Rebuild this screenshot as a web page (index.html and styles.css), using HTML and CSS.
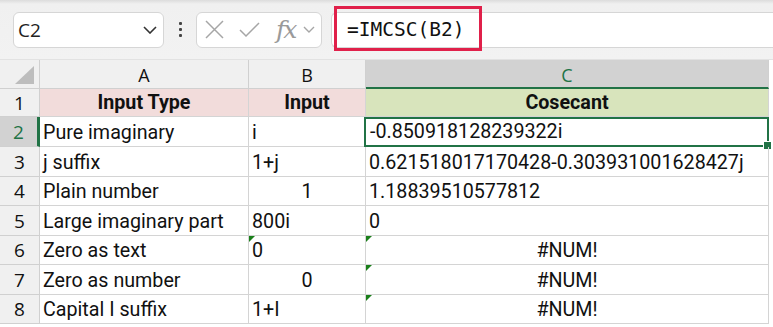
FILE: index.html
```html
<!DOCTYPE html>
<html lang="en">
<head>
    <meta charset="UTF-8">
    <title>IMCSC - Sheet</title>
    <link rel="stylesheet" href="styles.css">
</head>
<body>
    <div class="toolbar">
        <div class="name-box">
            <span>C2</span>
            <svg width="14" height="8" viewBox="0 0 14 8"><path d="M1 1 L7 7 L13 1" fill="none" stroke="#333" stroke-width="1.6"/></svg>
        </div>
        <div class="dots"><i></i><i></i><i></i></div>
        <div class="fx-buttons">
            <svg width="19" height="19" viewBox="0 0 19 19"><path d="M1 1 L18 18 M18 1 L1 18" stroke="#a6a6a6" stroke-width="1.5" fill="none"/></svg>
            <svg width="21" height="16" viewBox="0 0 21 16"><path d="M1 8 L7 14 L20 1" stroke="#a6a6a6" stroke-width="1.5" fill="none"/></svg>
            <span class="fx">fx</span>
            <svg width="12" height="7" viewBox="0 0 12 7"><path d="M1 1 L6 6 L11 1" fill="none" stroke="#a6a6a6" stroke-width="1.4"/></svg>
        </div>
        <div class="formula">
            <span class="formula-text">=IMCSC(B2)</span>
            <div class="highlight"></div>
        </div>
    </div>

    <div class="sheet">
        <div class="corner"><div class="corner-tri"></div></div>
        <div class="col-head">A</div>
        <div class="col-head">B</div>
        <div class="col-head active">C</div>

        <div class="row-head">1</div>
        <div class="cell head-pink">Input Type</div>
        <div class="cell head-pink">Input</div>
        <div class="cell head-green">Cosecant</div>

        <div class="row-head active">2</div>
        <div class="cell">Pure imaginary</div>
        <div class="cell">i</div>
        <div class="cell selected">-0.850918128239322i<span class="handle"></span></div>

        <div class="row-head">3</div>
        <div class="cell">j suffix</div>
        <div class="cell">1+j</div>
        <div class="cell">0.621518017170428-0.303931001628427j</div>

        <div class="row-head">4</div>
        <div class="cell">Plain number</div>
        <div class="cell center">1</div>
        <div class="cell">1.18839510577812</div>

        <div class="row-head">5</div>
        <div class="cell">Large imaginary part</div>
        <div class="cell">800i</div>
        <div class="cell">0</div>

        <div class="row-head">6</div>
        <div class="cell">Zero as text</div>
        <div class="cell flag">0</div>
        <div class="cell center flag">#NUM!</div>

        <div class="row-head">7</div>
        <div class="cell">Zero as number</div>
        <div class="cell center">0</div>
        <div class="cell center flag">#NUM!</div>

        <div class="row-head">8</div>
        <div class="cell">Capital I suffix</div>
        <div class="cell">1+I</div>
        <div class="cell center flag">#NUM!</div>
    </div>
</body>
</html>
```

FILE: styles.css
```css
body {
    margin: 0;
    padding: 0;
    background-color: #ffffff;
    font-family: Roboto, "Open Sans", sans-serif;
    overflow: hidden;
}
.toolbar {
    height: 60px;
    background: linear-gradient(#dcdcdc 0, #f0f0f0 4px, #f2f2f2 100%);
    display: flex;
    align-items: center;
    padding-left: 13px;
    box-sizing: border-box;
    border-bottom: 1px solid #e2e2e2;
}
.name-box {
    width: 151px;
    height: 36px;
    box-sizing: border-box;
    background: white;
    border: 1px solid #d6d6d6;
    border-radius: 6px;
    display: flex;
    align-items: center;
    justify-content: space-between;
    padding: 0 6px 0 4px;
    font-family: "Open Sans", sans-serif;
    font-size: 19px;
    color: #222;
}
.dots {
    width: 32px;
    display: flex;
    flex-direction: column;
    align-items: center;
    gap: 3px;
}
.dots i {
    width: 3px;
    height: 3px;
    background: #444;
    border-radius: 1px;
}
.fx-buttons {
    width: 126px;
    height: 36px;
    box-sizing: border-box;
    background: white;
    border: 1px solid #d6d6d6;
    border-radius: 6px;
    display: flex;
    align-items: center;
    padding-left: 8px;
    gap: 0;
}
.fx-buttons svg:first-child {
    margin-right: 15px;
}
.fx {
    font-family: "DejaVu Serif", serif;
    font-style: italic;
    font-size: 25px;
    line-height: 1;
    color: #9a9a9a;
    margin-left: 16px;
    margin-right: 8px;
    letter-spacing: -2px;
}
.formula {
    position: relative;
    flex: 1;
    height: 36px;
    margin-left: 9px;
    box-sizing: border-box;
    background: white;
    border: 1px solid #d6d6d6;
    border-right: none;
    border-radius: 6px 0 0 6px;
    display: flex;
    align-items: center;
    padding-left: 15px;
}
.formula-text {
    font-family: "DejaVu Sans Mono", monospace;
    font-size: 19.5px;
    color: #111;
}
.highlight {
    position: absolute;
    left: 2px;
    top: -7px;
    width: 148px;
    height: 45px;
    box-sizing: border-box;
    border: 3px solid #e0204a;
}
.sheet {
    display: grid;
    grid-template-columns: 40px 209px 117px 403px;
    grid-template-rows: 29px 28px 30px 30px 29px 30px 29px 30px 29px;
    font-size: 19.7px;
    color: #111;
}
.corner, .col-head, .row-head {
    background: #f0f0f0;
    border-right: 1px solid #d0d0d0;
    border-bottom: 1px solid #d0d0d0;
    box-sizing: border-box;
}
.corner {
    position: relative;
}
.corner-tri {
    position: absolute;
    right: 5px;
    bottom: 4px;
    width: 0;
    height: 0;
    border-left: 19px solid transparent;
    border-bottom: 18px solid #bdbdbd;
}
.col-head {
    display: flex;
    align-items: center;
    justify-content: center;
    font-family: "Open Sans", sans-serif;
    font-size: 18px;
    padding-top: 2px;
}
.col-head.active {
    background: #d2d2d2;
    color: #217346;
    border-bottom: 2px solid #217346;
}
.row-head {
    display: flex;
    align-items: center;
    justify-content: center;
    font-family: "Open Sans", sans-serif;
    font-size: 19px;
}
.row-head.active {
    background: #d2d2d2;
    color: #217346;
    border-right: 3px solid #217346;
}
.cell {
    position: relative;
    display: flex;
    align-items: flex-end;
    padding: 0 3px 2px 3px;
    border-right: 1px solid #d4d4d4;
    border-bottom: 1px solid #d4d4d4;
    box-sizing: border-box;
    white-space: nowrap;
}
.center {
    justify-content: center;
}
.head-pink {
    background: #f2dcdb;
    font-weight: bold;
    justify-content: center;
}
.head-green {
    background: #d8e4bc;
    font-weight: bold;
    justify-content: center;
}
.selected {
    border: 2px solid #217346;
    margin-left: -2px;
    padding-left: 4px;
}
.handle {
    position: absolute;
    right: -5px;
    bottom: -5px;
    width: 7px;
    height: 7px;
    background: #217346;
    border: 1px solid white;
}
.flag::before {
    content: "";
    position: absolute;
    left: 0;
    top: 0;
    border-top: 6px solid #1a7f1a;
    border-right: 6px solid transparent;
}
```
